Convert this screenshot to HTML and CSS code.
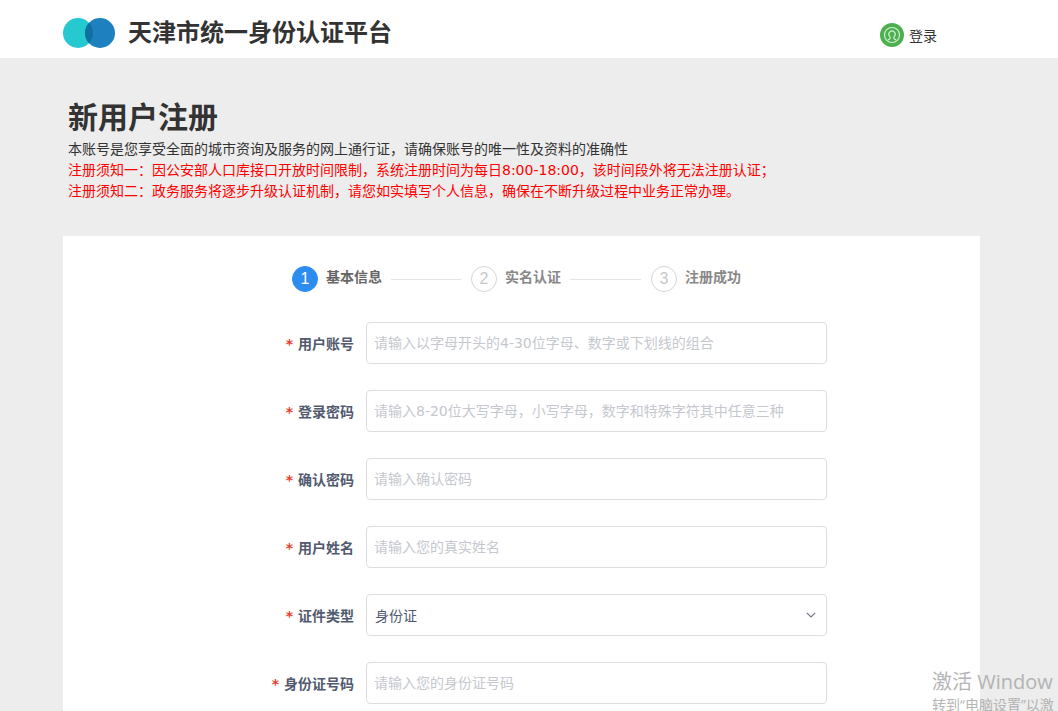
FILE: index.html
```html
<!DOCTYPE html>
<html lang="zh-CN">
<head>
<meta charset="utf-8">
<title>天津市统一身份认证平台</title>
<link rel="stylesheet" href="styles.css">
</head>
<body>
<header class="topbar">
  <div class="brand">
    <svg class="logo" width="52" height="30" viewBox="0 0 52 30"><circle cx="15" cy="15" r="15" fill="#26c9cf"/><circle cx="37" cy="15" r="15" fill="#1f80c0"/><path d="M26 4.800a15 15 0 0 1 0 20.400a15 15 0 0 1 0-20.400z" fill="#10709f"/></svg>
    <span class="brand-name">天津市统一身份认证平台</span>
  </div>
  <a class="login">
    <svg width="24" height="24" viewBox="0 0 24 24"><circle cx="12" cy="12" r="12" fill="#4caf50"/><circle cx="12" cy="12" r="7.500" fill="none" stroke="#d8f0d8" stroke-width="1.100"/><path d="M10.300 15.500c0-1-.1-1.400-.8-2.300a3.200 3.200 0 1 1 5 0c-.7.9-.8 1.300-.8 2.300M7.800 17l2.500-1.500M16.200 17l-2.500-1.500" fill="none" stroke="#d8f0d8" stroke-width="1.100"/></svg>
    <span>登录</span>
  </a>
</header>
<section class="intro">
  <h1>新用户注册</h1>
  <p>本账号是您享受全面的城市资询及服务的网上通行证，请确保账号的唯一性及资料的准确性</p>
  <p class="warn">注册须知一：因公安部人口库接口开放时间限制，系统注册时间为每日8:00-18:00，该时间段外将无法注册认证；</p>
  <p class="warn">注册须知二：政务服务将逐步升级认证机制，请您如实填写个人信息，确保在不断升级过程中业务正常办理。</p>
</section>
<main class="card">
  <ol class="steps">
    <li class="step active"><span class="num">1</span><span class="step-label">基本信息</span></li>
    <li class="line"></li>
    <li class="step"><span class="num">2</span><span class="step-label">实名认证</span></li>
    <li class="line wide"></li>
    <li class="step"><span class="num">3</span><span class="step-label">注册成功</span></li>
  </ol>
  <form class="form">
    <div class="row"><label class="lab"><i>*</i>用户账号</label><input class="field" placeholder="请输入以字母开头的4-30位字母、数字或下划线的组合"></div>
    <div class="row"><label class="lab"><i>*</i>登录密码</label><input class="field" placeholder="请输入8-20位大写字母，小写字母，数字和特殊字符其中任意三种"></div>
    <div class="row"><label class="lab"><i>*</i>确认密码</label><input class="field" placeholder="请输入确认密码"></div>
    <div class="row"><label class="lab"><i>*</i>用户姓名</label><input class="field" placeholder="请输入您的真实姓名"></div>
    <div class="row"><label class="lab"><i>*</i>证件类型</label><div class="field select"><span>身份证</span><svg width="10" height="6" viewBox="0 0 10 6"><path d="M.8.8 5 5l4.200-4.200" fill="none" stroke="#6b7280" stroke-width="1.100"/></svg></div></div>
    <div class="row"><label class="lab"><i>*</i>身份证号码</label><input class="field" placeholder="请输入您的身份证号码"></div>
  </form>
</main>
<div class="watermark"><div class="wm1">激活 Window</div><div class="wm2">转到“电脑设置”以激</div></div>
</body>
</html>
```
FILE: styles.css
```css
* { box-sizing: border-box; }
html, body { height: 711px; overflow: hidden; }
body { margin: 0; background: #ededed; font-family: "DejaVu Sans", "Noto Sans CJK SC", sans-serif; color: #333; position: relative; }
.topbar { height: 58px; background: #fff; display: flex; align-items: center; padding: 8px 121px 0 63px; justify-content: space-between; }
.brand { display: flex; align-items: center; gap: 13px; }
.logo { display: block; }
.brand-name { font-size: 24px; font-weight: 700; color: #333; line-height: 30px; }
.login { display: flex; align-items: center; gap: 5px; font-size: 14px; color: #333; width: 57px; white-space: nowrap; margin-top: 4px; }
.intro { padding: 40px 0 0 68px; height: 178px; }
.intro h1 { margin: 0 0 1px; font-size: 30px; line-height: 40px; font-weight: 700; color: #333; }
.intro p { margin: 0; font-size: 14px; line-height: 21px; color: #333; white-space: nowrap; }
.intro p.warn { color: #f00; }
.card { background: #fff; margin-left: 63px; width: 917px; height: 475px; padding-top: 30px; overflow: hidden; }
.steps { list-style: none; margin: 0 0 30px; padding: 0 0 0 229px; display: flex; align-items: center; height: 26px; }
.step { display: flex; align-items: center; gap: 8px; color: #888; font-size: 14px; font-weight: 700; }
.step.active { color: #666; }
.num { width: 26px; height: 26px; border-radius: 50%; border: 1px solid #d5d5d5; color: #c8c8c8; font-family: "Liberation Sans", sans-serif; font-weight: 400; font-size: 16px; display: flex; align-items: center; justify-content: center; }
.active .num { background: #2d8cf0; border-color: #2d8cf0; color: #fff; }
.step-label { position: relative; top: -3px; }
.line { height: 1px; background: #e4e4e4; width: 70px; margin: 0 10px 0 9px; }
.line.wide { width: 71px; }
.form { display: flex; flex-direction: column; gap: 26px; }
.row { display: flex; align-items: center; height: 42px; }
.lab { width: 303px; text-align: right; padding-right: 12px; font-size: 14px; font-weight: 700; color: #515a6e; white-space: nowrap; }
.lab i { color: #e53e30; font-style: normal; margin-right: 5px; font-size: 14px; }
.field { width: 461px; height: 42px; border: 1px solid #dcdee2; border-radius: 4px; padding: 0 7px; background: #fff; font: 14px "DejaVu Sans", "Noto Sans CJK SC", sans-serif; color: #515a6e; outline: none; }
.field::placeholder { color: #c5c8ce; opacity: 1; }
.select { display: flex; align-items: center; justify-content: space-between; padding: 0 10px 0 8px; }
.watermark { position: absolute; left: 932px; top: 669px; width: 126px; overflow: hidden; white-space: nowrap; color: #a9a9a9; opacity: .85; font-family: "Open Sans", "Noto Sans CJK SC", sans-serif; }
.wm1 { font-size: 20px; line-height: 26px; }
.wm2 { font-size: 14px; line-height: 18px; margin-top: 1px; }
```
